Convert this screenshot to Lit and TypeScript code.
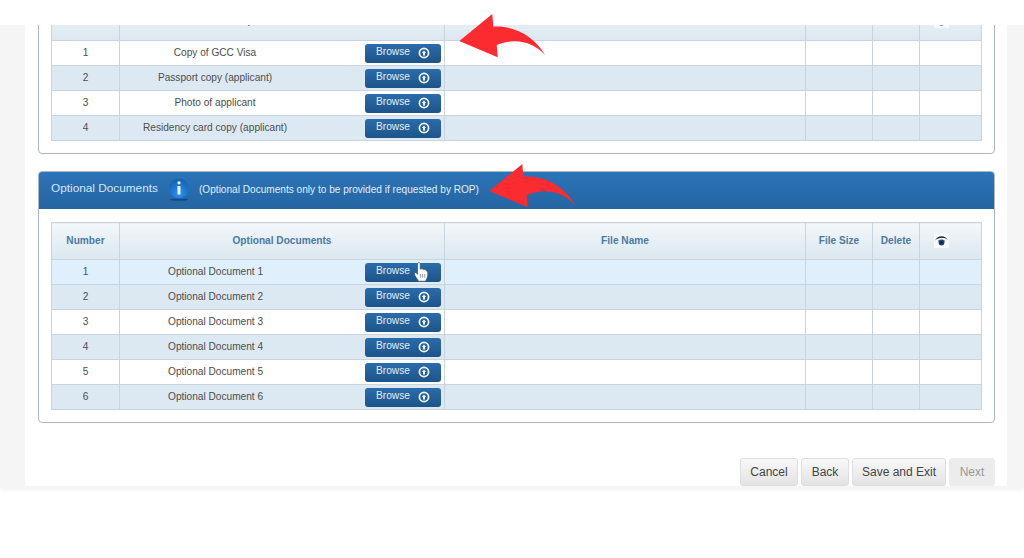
import { LitElement, html, css, svg } from "lit";
import { customElement } from "lit/decorators.js";

const upIcon = html`<svg class="up" viewBox="0 0 12 12" width="12" height="12">
  <circle cx="6" cy="6" r="4.6" fill="none" stroke="#f2f7fb" stroke-width="1.7"/>
  <path d="M6 3.4 L8.1 6 H7 V8.5 H5 V6 H3.9 Z" fill="#f2f7fb"/>
</svg>`;

const eyeIcon = html`<svg class="eye" viewBox="0 0 15 14" width="15" height="14">
  <rect width="15" height="14" fill="#f7f9fb"/>
  <path d="M1 6.6 C3.6 1 10.8 0.6 14 6 C10.6 3 4.6 3 1 6.6 Z" fill="#1d2530"/>
  <path d="M3.6 7 C5.4 5 9.6 5 11.4 7 L10 8 H5 Z" fill="#7a828c"/>
  <circle cx="7.5" cy="8.6" r="2.9" fill="#1f3f86"/>
  <circle cx="7.5" cy="8.6" r="1.2" fill="#0d1a3c"/>
</svg>`;

const infoIcon = html`<svg class="info" viewBox="0 0 26 26" width="26" height="26">
  <defs>
    <radialGradient id="ball" cx="50%" cy="75%" r="70%">
      <stop offset="0" stop-color="#2f94ee"/>
      <stop offset="0.7" stop-color="#1a6fc6"/>
      <stop offset="1" stop-color="#1a63ae"/>
    </radialGradient>
  </defs>
  <ellipse cx="13" cy="23.6" rx="9" ry="1.1" fill="#123f70" opacity="0.75"/>
  <circle cx="13" cy="12.5" r="10" fill="url(#ball)"/>
  <circle cx="13" cy="6.8" r="1.6" fill="#e9f3fb"/>
  <path d="M11.4 10 H14.5 V18.6 H11.6 Z" fill="#e9f3fb"/>
</svg>`;

const handCursor = html`<svg class="hand" viewBox="0 0 14 20" width="14" height="20">
  <path d="M3.6 1.6 C3.6 0.2 6.2 0.2 6.2 1.6 V7.2 C7.4 6.6 9 6.8 9.6 7.6 C10.8 7.2 12.2 7.8 12.6 9 C13.6 9 13.8 10.6 13.8 12 C13.8 15 12.6 17 11.6 19.2 H4.4 C3.4 16.6 1 14.4 0.4 12 C0.2 10.6 1.8 10.4 2.6 11.2 L3.6 12.4 Z"
    fill="#ffffff" stroke="#2a4a68" stroke-width="0.6"/>
  <path d="M6.4 12 V15.6 M8.6 12 V15.6 M10.8 12 V15.6" stroke="#5d7488" stroke-width="0.7" fill="none"/>
</svg>`;

const arrowShape = svg`<path d="M9.3 36 L42.3 9 L43.3 21.7 C62 20 84 30 95 50 C84 37 65 32 46.7 40 L47.7 52.3 Z" fill="#fb2b2f"/>`;

interface Row { n: number; label: string; }

@customElement("app-root")
export class AppRoot extends LitElement {
  static styles = css`
    :host {
      display: block;
      position: relative;
      width: 1024px;
      height: 558px;
      overflow: hidden;
      background: #fff;
      font-family: "Liberation Sans", Arial, sans-serif;
      color: #4d4d4d;
    }
    .top { height: 25px; }
    .stage {
      height: 463px;
      background: #f5f5f5;
      padding: 0 17px 0 25px;
      box-sizing: border-box;
      box-shadow: 0 2px 3px rgba(0,0,0,0.05);
    }
    .sheet {
      height: 461px;
      background: #fff;
      overflow: hidden;
    }
    .scroll {
      margin-top: -73px;
      padding: 0 12px 0 13px;
      display: flex;
      flex-direction: column;
      gap: 17px;
    }
    .panel {
      border: 1px solid #aab8bf;
      border-radius: 4px;
      overflow: hidden;
      background: #fff;
    }
    .panel-head {
      height: 37px;
      display: flex;
      align-items: center;
      padding-left: 12px;
      background: linear-gradient(#2b74b8, #2565a2);
      color: #d3e6f7;
    }
    .title { font-size: 11.8px; width: 115px; margin-top: -5px; }
    .info { flex: none; margin-top: -3px; }
    .note { font-size: 10.1px; color: #e3edf6; margin-left: 7px; margin-top: -2px; }
    .panel-body { padding: 13px 13px 12px 12px; }
    table {
      width: 930px;
      table-layout: fixed;
      border-collapse: collapse;
      font-size: 10.15px;
    }
    th, td {
      border: 1px solid #c8d5de;
      padding: 0;
      text-align: center;
    }
    th {
      height: 35px;
      padding-bottom: 1px;
      font-weight: bold;
      color: #4a7aa5;
      background: linear-gradient(#f3f7fa, #dbe7f0);
    }
    table.clipped th { height: 33px; padding-bottom: 3px; }
    td { height: 22px; padding-bottom: 2px; }
    tr.odd td { background: #fff; }
    tr.even td { background: #dde9f2; }
    tr.hover td { background: #dff0fc; }
    .doc {
      display: flex;
      align-items: center;
    }
    .label { flex: 0 0 190px; text-align: center; }
    .label.left { text-align: left; padding-left: 48px; box-sizing: border-box; }
    .browse {
      position: relative;
      margin-left: 55px;
      margin-top: 2px;
      width: 76px;
      height: 19px;
      border-radius: 3px;
      background: linear-gradient(#2b6cab, #1d5489);
      color: #e4eef6;
      font-size: 10.2px;
      display: flex;
      align-items: center;
      padding-left: 11px;
      box-sizing: border-box;
      gap: 8px;
    }
    .browse span { margin-top: -3px; }
    .up { flex: none; }
    .eye { display: block; margin-left: 14px; }
    .hand { position: absolute; left: 49px; top: -1px; }
    .actions {
      margin-top: 35px;
      padding-right: 12px;
      display: flex;
      justify-content: flex-end;
      gap: 3px;
    }
    .btn {
      height: 28px;
      box-sizing: border-box;
      border: 1px solid #dedede;
      border-radius: 3px;
      background: linear-gradient(#f8f8f8, #e3e3e3);
      color: #444;
      font-size: 12px;
      display: flex;
      align-items: center;
      justify-content: center;
    }
    .cancel { width: 58px; }
    .back { width: 48px; }
    .save { width: 94px; }
    .next {
      width: 46px;
      background: #ececec;
      border-color: #ececec;
      color: #999;
    }
    .arrow { position: absolute; width: 110px; height: 60px; }
    .a1 { left: 450px; top: 5px; }
    .a2 { left: 480px; top: 155px; }
  `;

  private row(r: Row, left: boolean, hover: boolean) {
    const cls = hover ? "hover" : r.n % 2 ? "odd" : "even";
    return html`<tr class=${cls}>
      <td>${r.n}</td>
      <td>
        <div class="doc">
          <div class="label ${left ? "left" : ""}">${r.label}</div>
          <div class="browse">
            <span>Browse</span>
            ${hover ? handCursor : upIcon}
          </div>
        </div>
      </td>
      <td></td><td></td><td></td><td></td>
    </tr>`;
  }

  private table(head: string, rows: Row[], left: boolean, hoverFirst: boolean) {
    return html`<table class=${left ? "" : "clipped"}>
      <colgroup>
        <col style="width:68px" /><col style="width:325px" /><col style="width:361px" />
        <col style="width:67px" /><col style="width:47px" /><col style="width:62px" />
      </colgroup>
      <thead>
        <tr>
          <th>Number</th><th>${head}</th><th>File Name</th>
          <th>File Size</th><th>Delete</th><th>${eyeIcon}</th>
        </tr>
      </thead>
      <tbody>
        ${rows.map((r, i) => this.row(r, left, hoverFirst && i === 0))}
      </tbody>
    </table>`;
  }

  render() {
    const required: Row[] = [
      { n: 1, label: "Copy of GCC Visa" },
      { n: 2, label: "Passport copy (applicant)" },
      { n: 3, label: "Photo of applicant" },
      { n: 4, label: "Residency card copy (applicant)" },
    ];
    const optional: Row[] = [1, 2, 3, 4, 5, 6].map((n) => ({ n, label: `Optional Document ${n}` }));
    return html`
      <div class="top"></div>
      <div class="stage">
        <div class="sheet">
          <div class="scroll">
            <section class="panel">
              <div class="panel-head"></div>
              <div class="panel-body">${this.table("Required Documents", required, false, false)}</div>
            </section>
            <section class="panel">
              <div class="panel-head">
                <div class="title">Optional Documents</div>
                ${infoIcon}
                <div class="note">(Optional Documents only to be provided if requested by ROP)</div>
              </div>
              <div class="panel-body">${this.table("Optional Documents", optional, true, true)}</div>
            </section>
          </div>
          <div class="actions">
            <div class="btn cancel">Cancel</div>
            <div class="btn back">Back</div>
            <div class="btn save">Save and Exit</div>
            <div class="btn next">Next</div>
          </div>
        </div>
      </div>
      <svg class="arrow a1" viewBox="0 0 110 60">${arrowShape}</svg>
      <svg class="arrow a2" viewBox="0 0 110 60">${arrowShape}</svg>
    `;
  }
}
